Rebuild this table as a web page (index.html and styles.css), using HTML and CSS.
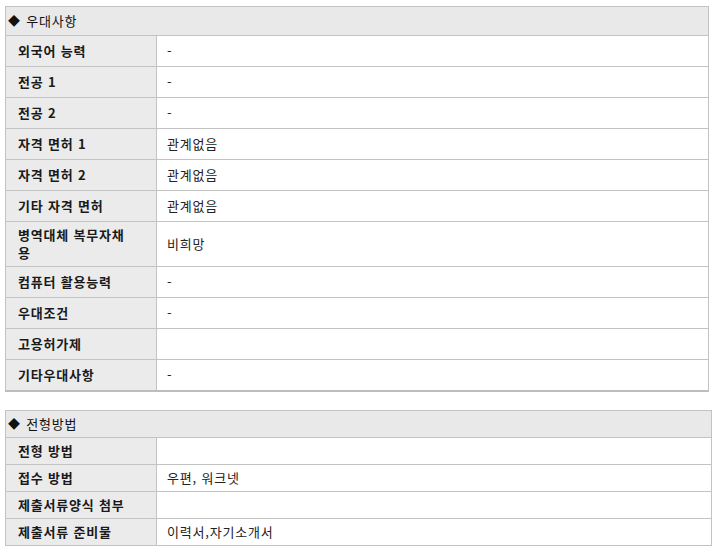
FILE: index.html
```html
<!DOCTYPE html>
<html lang="ko">
<head>
<meta charset="utf-8">
<title>우대사항</title>
<link rel="stylesheet" href="styles.css">
</head>
<body>
<div class="page">
  <table class="info info-first">
    <colgroup><col class="col-lbl"><col></colgroup>
    <tr><th class="sec" colspan="2"><span class="dia">◆</span> 우대사항</th></tr>
    <tr><th class="lbl">외국어 능력</th><td class="val">-</td></tr>
    <tr><th class="lbl">전공 1</th><td class="val">-</td></tr>
    <tr><th class="lbl">전공 2</th><td class="val">-</td></tr>
    <tr><th class="lbl">자격 면허 1</th><td class="val">관계없음</td></tr>
    <tr><th class="lbl">자격 면허 2</th><td class="val">관계없음</td></tr>
    <tr><th class="lbl">기타 자격 면허</th><td class="val">관계없음</td></tr>
    <tr><th class="lbl lbl-wrap">병역대체 복무자채용</th><td class="val">비희망</td></tr>
    <tr><th class="lbl">컴퓨터 활용능력</th><td class="val">-</td></tr>
    <tr><th class="lbl">우대조건</th><td class="val">-</td></tr>
    <tr><th class="lbl">고용허가제</th><td class="val"></td></tr>
    <tr><th class="lbl">기타우대사항</th><td class="val">-</td></tr>
  </table>

  <table class="info info-second">
    <colgroup><col class="col-lbl"><col></colgroup>
    <tr><th class="sec" colspan="2"><span class="dia">◆</span> 전형방법</th></tr>
    <tr><th class="lbl">전형 방법</th><td class="val"></td></tr>
    <tr><th class="lbl">접수 방법</th><td class="val">우편, 워크넷</td></tr>
    <tr><th class="lbl">제출서류양식 첨부</th><td class="val"></td></tr>
    <tr><th class="lbl">제출서류 준비물</th><td class="val">이력서,자기소개서</td></tr>
  </table>
</div>
</body>
</html>
```

FILE: styles.css
```css
html, body {
  margin: 0;
  padding: 0;
  background: #ffffff;
}

body {
  font-family: "Noto Sans CJK KR", "Noto Sans", sans-serif;
  font-size: 13px;
  letter-spacing: 0.8px;
  color: #222;
}

.page {
  padding: 6px 0 0 5px;
  display: flex;
  flex-direction: column;
  align-items: flex-start;
  gap: 18px;
}

.info {
  border-collapse: collapse;
  table-layout: fixed;
  border: 1px solid #c3c3c3;
}

.col-lbl {
  width: 151px;
}

.info-first {
  width: 704px;
  border-bottom: 2px solid #bdbdbd;
}

.info-second {
  width: 707px;
}

.info th,
.info td {
  border: 1px solid #c3c3c3;
  line-height: 18px;
  text-align: left;
  vertical-align: middle;
}

.info-first .lbl,
.info-first .val {
  padding-top: 5px;
  padding-bottom: 5px;
  height: 20px;
}

.info-first .lbl-wrap {
  padding-top: 4px;
  padding-bottom: 4px;
}

.info-second .lbl,
.info-second .val {
  padding-top: 4px;
  padding-bottom: 4px;
  height: 18px;
}

.sec {
  background: #e9e9e9;
  font-weight: normal;
  color: #111;
  padding: 5px 0 5px 2px;
}

.info-second .sec {
  padding: 4px 0 4px 2px;
}

.dia {
  font-size: 12px;
  margin-right: 1px;
}

.lbl {
  background: #ebebeb;
  font-weight: bold;
  color: #1a1a1a;
  padding-left: 12px;
  padding-right: 22px;
}

.val {
  padding-left: 10px;
  padding-right: 4px;
  color: #222;
}
```
